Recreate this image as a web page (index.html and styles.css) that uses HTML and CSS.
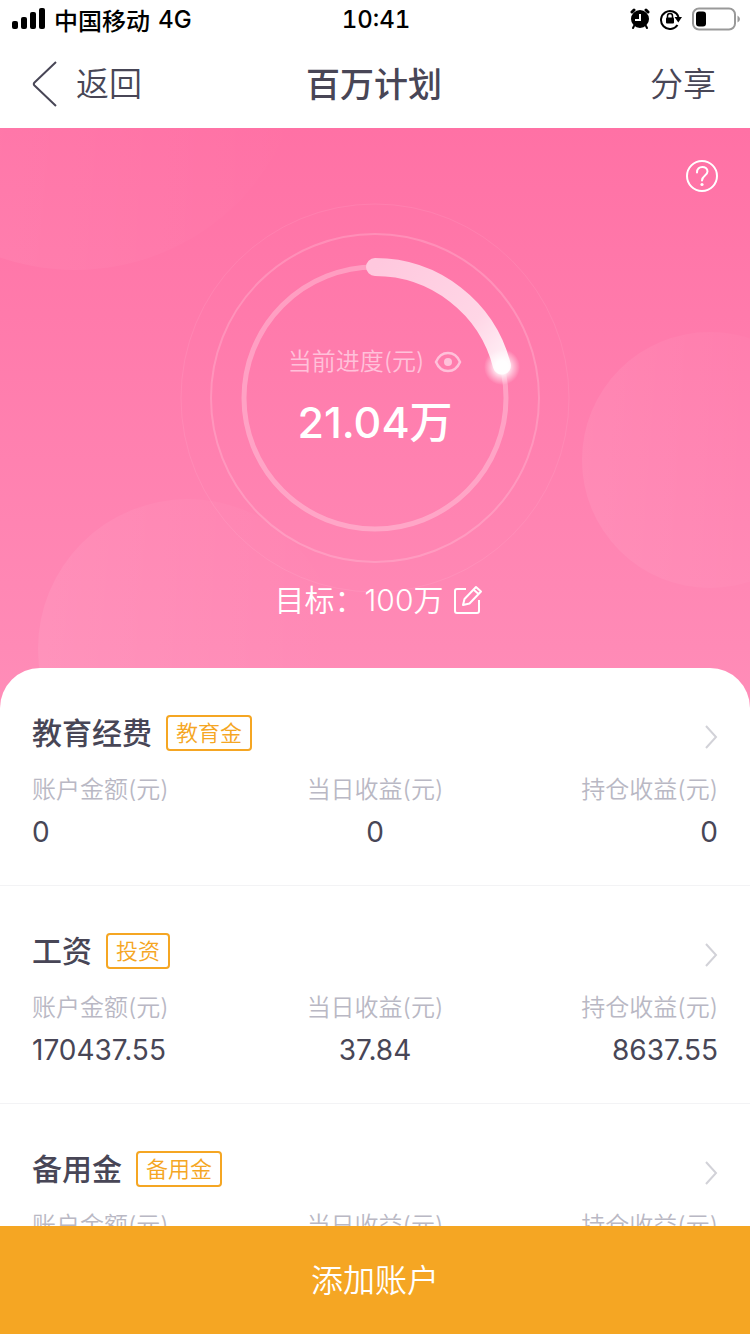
FILE: index.html
```
<!DOCTYPE html>
<html lang="zh-CN">
<head>
    <meta charset="UTF-8">
    <meta name="viewport" content="width=device-width, initial-scale=1.0">
    <title>百万计划</title>
    <link rel="stylesheet" href="styles.css">
</head>
<body>
    <div class="status-bar">
        <div class="status-left">
            <svg width="34" height="22" viewBox="0 0 34 22">
                <rect x="0" y="13" width="6" height="8" rx="2"/>
                <rect x="9" y="9" width="6" height="12" rx="2"/>
                <rect x="18" y="4" width="6" height="17" rx="2"/>
                <rect x="27" y="0" width="6" height="21" rx="2"/>
            </svg>
            <span>中国移动</span>
            <span>4G</span>
        </div>
        <div class="status-time">10:41</div>
        <div class="status-right">
            <!-- alarm -->
            <svg width="20" height="22" viewBox="0 0 20 22">
                <circle cx="10" cy="11" r="9"/>
                <path d="M2 4 4 2M18 4 16 2" stroke="#000" stroke-width="3" stroke-linecap="round"/>
                <path d="M4 18 3 20M16 18 17 20" stroke="#000" stroke-width="2" stroke-linecap="round"/>
                <path d="M10 6V12H5" fill="none" stroke="#fff" stroke-width="2"/>
            </svg>
            <!-- rotation lock -->
            <svg width="22" height="22" viewBox="0 0 22 22">
                <path d="M17.5 17A9 9 0 1 1 18.500 9" fill="none" stroke="#000" stroke-width="2"/>
                <path d="M14.500 9H22L18.300 14.500Z"/>
                <rect x="6" y="9.500" width="8" height="6" rx="1"/>
                <path d="M7.500 10V8a2.500 2.500 0 0 1 5 0V10" fill="none" stroke="#000" stroke-width="1.500"/>
            </svg>
            <!-- battery -->
            <svg width="48" height="24" viewBox="0 0 48 24">
                <rect x="1" y="1.500" width="42" height="21" rx="6" fill="none" stroke="#999" stroke-width="2"/>
                <rect x="4" y="4.500" width="10" height="15" rx="3"/>
                <path d="M45.500 8.500Q48 10 48 12T45.500 15.500Z" fill="#999"/>
            </svg>
        </div>
    </div>

    <header class="nav-bar">
        <a class="nav-back" href="#">
            <svg width="26" height="48" viewBox="0 0 26 48">
                <path d="M24 2 2.500 22.500Q1 24 2.500 25.500L24 46" fill="none" stroke="#484656" stroke-width="2"/>
            </svg>
            <span>返回</span>
        </a>
        <h1>百万计划</h1>
        <a class="nav-share" href="#"><span>分享</span></a>
    </header>

    <main class="content">
        <section class="hero">
            <svg class="hero-bg" viewBox="0 0 750 580" preserveAspectRatio="xMidYMin slice">
                <defs>
                    <linearGradient id="fade" x1="0" y1="0" x2="1" y2="0">
                        <stop offset="0" stop-color="#fff" stop-opacity="0.070"/>
                        <stop offset="1" stop-color="#fff" stop-opacity="0"/>
                    </linearGradient>
                </defs>
                <circle cx="75" cy="-88" r="230" fill="url(#fade)"/>
                <circle cx="710" cy="332" r="128" fill="url(#fade)"/>
                <circle cx="188" cy="521" r="150" fill="url(#fade)"/>
            </svg>

            <button class="help" type="button" aria-label="帮助">
                <svg width="34" height="34" viewBox="0 0 34 34">
                    <circle cx="17" cy="17" r="15" fill="none" stroke="#fff" stroke-width="2"/>
                    <path d="M12 13.500C12 6 22.500 6.500 22.500 12.500C22.500 16.500 17 16.500 17 21.500" fill="none" stroke="#fff" stroke-width="2" stroke-linecap="round"/>
                    <circle cx="17" cy="25.500" r="1.600" fill="#fff"/>
                </svg>
            </button>

            <div class="progress">
                <svg class="progress-ring" viewBox="0 0 390 390">
                    <defs>
                        <linearGradient id="bar" gradientUnits="userSpaceOnUse" x1="195" y1="64" x2="322" y2="162">
                            <stop offset="0" stop-color="#ffc8de"/>
                            <stop offset="0.700" stop-color="#ffd6e6"/>
                            <stop offset="1" stop-color="#fff0f6"/>
                        </linearGradient>
                        <radialGradient id="glow">
                            <stop offset="0.350" stop-color="#fff" stop-opacity="0.900"/>
                            <stop offset="0.650" stop-color="#fff" stop-opacity="0.450"/>
                            <stop offset="1" stop-color="#fff" stop-opacity="0"/>
                        </radialGradient>
                    </defs>
                    <g fill="none" stroke="#fff">
                        <circle cx="195" cy="195" r="194" stroke-opacity="0.080"/>
                        <circle cx="195" cy="195" r="164" stroke-width="2" stroke-opacity="0.180"/>
                        <circle cx="195" cy="195" r="131" stroke-width="5" stroke-opacity="0.280"/>
                    </g>
                    <path d="M195 64A131 131 0 0 1 321.900 162.600" fill="none" stroke="url(#bar)" stroke-width="18" stroke-linecap="round"/>
                    <circle cx="322" cy="164" r="18" fill="url(#glow)"/>
                </svg>
                <div class="progress-text">
                    <div class="progress-label">
                        当前进度(元)
                        <svg width="28" height="22" viewBox="0 0 28 22">
                            <path d="M2 11C7-1 21-1 26 11C21 23 7 23 2 11Z" fill="none" stroke="#ffc1da" stroke-width="2.500"/>
                            <circle cx="14" cy="11" r="4" fill="#ffc1da"/>
                        </svg>
                    </div>
                    <div class="progress-value">21.04万</div>
                </div>
            </div>

            <div class="goal">
                <span>目标：100万</span>
                <button type="button" aria-label="修改目标">
                    <svg width="30" height="30" viewBox="0 0 30 30" fill="none" stroke="#fff" stroke-width="2" stroke-linejoin="round">
                        <path d="M13 4H4Q2 4 2 6V26Q2 28 4 28H24Q26 28 26 26V15"/>
                        <path d="M10 20 11.500 14 23 2 28 6.500 16.500 18.500ZM20.500 4.500 25.500 9"/>
                    </svg>
                </button>
            </div>
        </section>

        <ul class="accounts">
            <li class="account">
                <div class="account-head">
                    <h2>教育经费</h2>
                    <span class="tag">教育金</span>
                    <svg class="arrow" width="14" height="26" viewBox="0 0 14 26"><path d="M2 2 12 13 2 24"/></svg>
                </div>
                <dl>
                    <div><dt>账户金额(元)</dt><dd>0</dd></div>
                    <div><dt>当日收益(元)</dt><dd>0</dd></div>
                    <div><dt>持仓收益(元)</dt><dd>0</dd></div>
                </dl>
            </li>
            <li class="account">
                <div class="account-head">
                    <h2>工资</h2>
                    <span class="tag">投资</span>
                    <svg class="arrow" width="14" height="26" viewBox="0 0 14 26"><path d="M2 2 12 13 2 24"/></svg>
                </div>
                <dl>
                    <div><dt>账户金额(元)</dt><dd>170437.55</dd></div>
                    <div><dt>当日收益(元)</dt><dd>37.84</dd></div>
                    <div><dt>持仓收益(元)</dt><dd>8637.55</dd></div>
                </dl>
            </li>
            <li class="account">
                <div class="account-head">
                    <h2>备用金</h2>
                    <span class="tag">备用金</span>
                    <svg class="arrow" width="14" height="26" viewBox="0 0 14 26"><path d="M2 2 12 13 2 24"/></svg>
                </div>
                <dl>
                    <div><dt>账户金额(元)</dt></div>
                    <div><dt>当日收益(元)</dt></div>
                    <div><dt>持仓收益(元)</dt></div>
                </dl>
            </li>
        </ul>
    </main>

    <button class="add-button" type="button">添加账户</button>
</body>
</html>
```
FILE: styles.css
```
* {
    box-sizing: border-box;
    margin: 0;
    padding: 0;
}
body {
    height: 100vh;
    display: flex;
    flex-direction: column;
    background: #fff;
    color: #484656;
    font-family: Inter, "Noto Sans CJK SC", sans-serif;
    font-weight: 350;
}
svg {
    display: block;
    flex-shrink: 0;
}
button {
    border: none;
    background: none;
    color: inherit;
    font: inherit;
    cursor: pointer;
}
a {
    color: inherit;
    text-decoration: none;
}

/* top bars */
.status-bar, .nav-bar {
    display: grid;
    grid-template-columns: 1fr auto 1fr;
    align-items: center;
    flex-shrink: 0;
}
.status-bar {
    height: 40px;
    padding: 0 10px 2px 12px;
    color: #000;
    font-size: 24px;
    font-weight: 500;
}
.status-time {
    font-variant-numeric: tabular-nums;
}
.status-left, .status-right {
    display: flex;
    align-items: center;
    gap: 10px;
}
.status-left {
    gap: 8px;
}
.status-right {
    justify-content: flex-end;
}
.nav-bar {
    height: 88px;
    padding: 0 34px 0 32px;
    font-size: 33px;
}
.nav-bar h1 {
    padding-bottom: 4px;
    font-size: 34px;
    font-weight: 500;
}
.nav-back {
    display: flex;
    align-items: center;
    gap: 18px;
}
.nav-back span {
    padding-bottom: 4px;
}
.nav-share {
    padding-bottom: 4px;
    text-align: right;
}

.content {
    flex: 1;
    min-height: 0;
    overflow-y: auto;
    scrollbar-width: none;
}

/* progress area */
.hero {
    position: relative;
    display: flex;
    flex-direction: column;
    align-items: center;
    padding: 75px 32px 88px;
    background: linear-gradient(#ff71a5, #ff8db8);
    color: #fff;
}
.hero-bg {
    position: absolute;
    top: 0;
    left: 0;
    width: 100%;
    height: 100%;
}
.help {
    position: absolute;
    top: 31px;
    right: 31px;
}
.progress {
    position: relative;
    width: 390px;
    margin-bottom: -13px;
}
.progress-ring {
    width: 100%;
}
.progress-text {
    position: absolute;
    inset: 0;
    display: flex;
    flex-direction: column;
    align-items: center;
    justify-content: center;
    padding-top: 2px;
}
.progress-label {
    display: flex;
    align-items: center;
    gap: 10px;
    color: #ffc1da;
    font-size: 24px;
    line-height: 36px;
}
.progress-value {
    font-size: 43px;
    font-weight: 450;
    line-height: 64px;
    margin-top: 10px;
}
.goal {
    position: relative;
    display: flex;
    align-items: center;
    gap: 10px;
    padding-left: 8px;
    font-size: 30px;
    line-height: 40px;
}

/* account list */
.accounts {
    position: relative;
    margin-top: -40px;
    border-radius: 40px 40px 0 0;
    background: #fff;
    list-style: none;
}
.account {
    padding: 47px 32px 33px;
    border-bottom: 1px solid #f3f3f5;
}
.account-head {
    display: flex;
    align-items: center;
    height: 36px;
}
.account-head h2 {
    padding-bottom: 4px;
    font-size: 30px;
    font-weight: 500;
}
.tag {
    margin-left: 14px;
    padding: 0 8px;
    border: 2px solid #f5a623;
    border-radius: 4px;
    color: #f5a623;
    font-size: 22px;
    line-height: 32px;
}
.arrow {
    margin: 8px 0 0 auto;
    fill: none;
    stroke: #d2d2d8;
    stroke-width: 2;
}
.account dl {
    display: grid;
    grid-template-columns: repeat(3, 1fr);
    margin-top: 22px;
    text-align: center;
}
.account dl div:first-child {
    text-align: left;
}
.account dl div:last-child {
    text-align: right;
}
.account dt {
    color: #b9b8c4;
    font-size: 24px;
    line-height: 34px;
}
.account dd {
    margin-top: 5px;
    font-size: 28px;
    font-weight: 400;
    line-height: 40px;
}

.add-button {
    flex-shrink: 0;
    height: 108px;
    padding-bottom: 4px;
    background: #f5a623;
    color: #fff;
    font-size: 32px;
}
```
